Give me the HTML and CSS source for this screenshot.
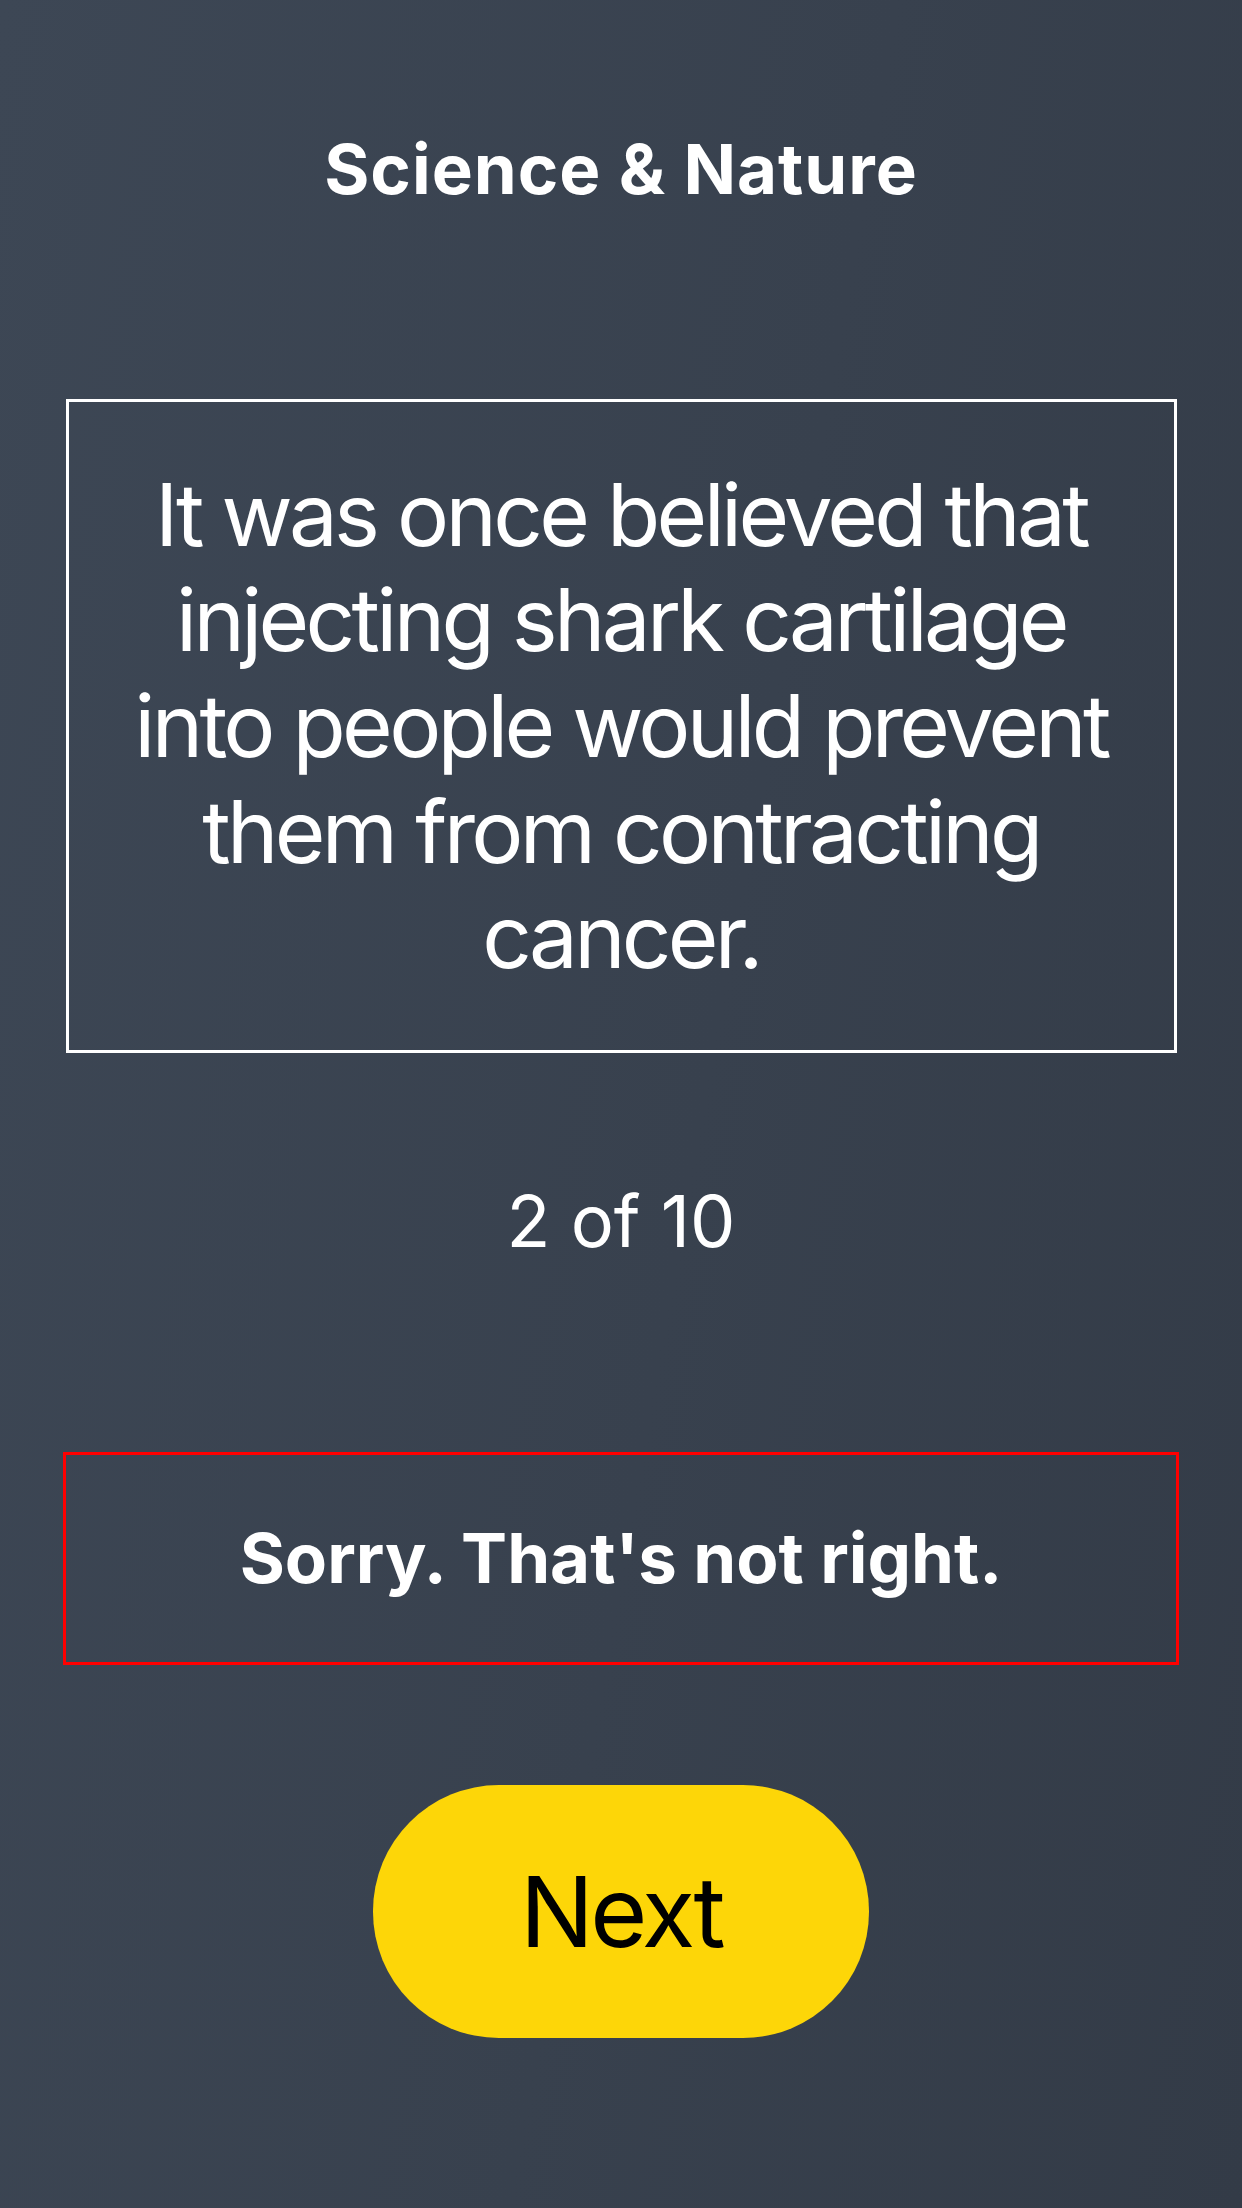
FILE: index.html
```html
<!DOCTYPE html>
<html lang="en">
<head>
<meta charset="utf-8">
<title>Science &amp; Nature</title>
<link rel="stylesheet" href="styles.css">
</head>
<body>
<main class="screen">
  <h1 class="title">Science &amp; Nature</h1>
  <section class="question">
    <p class="question-text">It was once believed that injecting shark cartilage into people would prevent them from contracting cancer.</p>
  </section>
  <p class="progress">2 of 10</p>
  <div class="feedback">Sorry. That's not right.</div>
  <button class="next-btn" type="button">Next</button>
</main>
</body>
</html>
```

FILE: styles.css
```css
html, body {
  margin: 0;
  padding: 0;
}

body {
  width: 1242px;
  height: 2208px;
  background: linear-gradient(100deg, #3d4755 0%, #38414e 55%, #333b47 100%);
  font-family: "Inter", "Liberation Sans", sans-serif;
  color: #ffffff;
  overflow: hidden;
}

.screen {
  display: flex;
  flex-direction: column;
  align-items: center;
  padding-top: 128px;
}

.title {
  margin: 0;
  font-size: 69px;
  font-weight: 700;
  line-height: 1.2;
  letter-spacing: 1px;
}

.question {
  box-sizing: border-box;
  width: 1111px;
  margin-top: 188px;
  border: 3px solid #ffffff;
  padding: 60px 40px;
}

.question-text {
  margin: 0;
  font-size: 87px;
  font-weight: 400;
  line-height: 1.214;
  letter-spacing: -3.7px;
  text-align: center;
}

.progress {
  margin: 125px 0 0;
  font-size: 72px;
  font-weight: 400;
  line-height: 1.2;
}

.feedback {
  box-sizing: border-box;
  width: 1116px;
  margin-top: 188px;
  border: 3px solid #ff0000;
  padding: 62px 0;
  text-align: center;
  font-size: 69px;
  font-weight: 700;
  line-height: 1.2;
}

.next-btn {
  margin-top: 120px;
  width: 496px;
  height: 253px;
  border: none;
  border-radius: 126px;
  background: #fdd608;
  color: #000000;
  font-family: "Inter", "Liberation Sans", sans-serif;
  font-size: 98px;
  font-weight: 400;
  letter-spacing: -3.5px;
  padding: 0;
}
```
